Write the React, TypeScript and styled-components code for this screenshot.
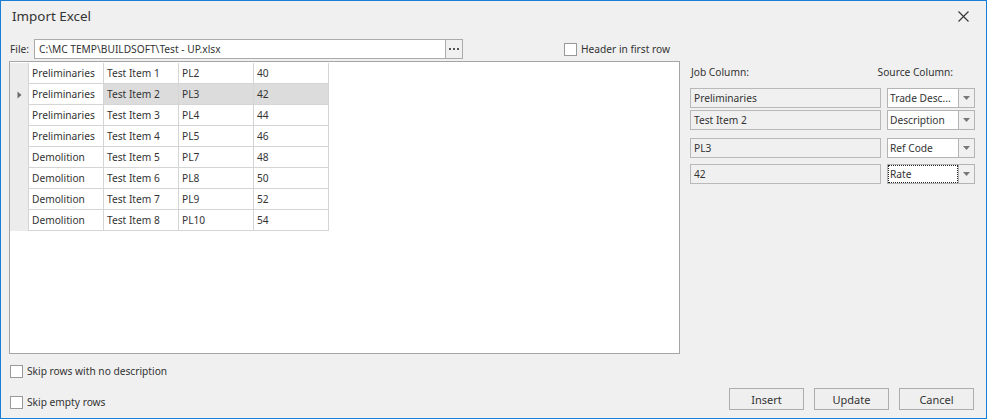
import React from "react";
import styled, { createGlobalStyle } from "styled-components";

const GlobalStyle = createGlobalStyle`
  html, body {
    margin: 0;
    padding: 0;
    background: #f0f0f0;
  }
  * {
    box-sizing: border-box;
  }
`;

const rows = [
  ["Preliminaries", "Test Item 1", "PL2", "40"],
  ["Preliminaries", "Test Item 2", "PL3", "42"],
  ["Preliminaries", "Test Item 3", "PL4", "44"],
  ["Preliminaries", "Test Item 4", "PL5", "46"],
  ["Demolition", "Test Item 5", "PL7", "48"],
  ["Demolition", "Test Item 6", "PL8", "50"],
  ["Demolition", "Test Item 7", "PL9", "52"],
  ["Demolition", "Test Item 8", "PL10", "54"],
];

const mappings = [
  { job: "Preliminaries", source: "Trade Desc...", gap: 0, focused: false },
  { job: "Test Item 2", source: "Description", gap: 2, focused: false },
  { job: "PL3", source: "Ref Code", gap: 8, focused: false },
  { job: "42", source: "Rate", gap: 6, focused: true },
];

const Window = styled.div`
  width: 987px;
  height: 419px;
  border: 1px solid #1a7fd4;
  background: #f0f0f0;
  display: flex;
  flex-direction: column;
  font-family: "Noto Sans", "Open Sans", sans-serif;
  font-size: 10.2px;
  color: #333;
`;

const TitleBar = styled.div`
  height: 30px;
  display: flex;
  align-items: center;
  justify-content: space-between;
  padding: 0 17px 0 11px;
`;

const Title = styled.div`
  font-size: 13.4px;
  color: #333;
`;

const CloseButton = styled.div`
  width: 12px;
  height: 12px;
  display: flex;
  align-items: center;
  justify-content: center;
`;

const FileRow = styled.div`
  display: flex;
  align-items: center;
  height: 20px;
  margin-top: 8px;
  padding-left: 9px;
`;

const FileLabel = styled.span`
  width: 24px;
`;

const PathBox = styled.div`
  width: 429px;
  height: 20px;
  display: flex;
  background: #fff;
  border: 1px solid #ababab;
`;

const PathText = styled.div`
  flex: 1;
  padding: 0 4px;
  line-height: 18px;
  white-space: nowrap;
  overflow: hidden;
`;

const EllipsisButton = styled.div`
  width: 17px;
  border-left: 1px solid #ababab;
  background: #f0f0f0;
  display: flex;
  align-items: center;
  justify-content: center;
`;

const CheckLabel = styled.label<{ $offset?: number }>`
  display: flex;
  align-items: center;
  gap: 4px;
  height: 14px;
  margin-left: ${(p) => p.$offset ?? 0}px;
  white-space: nowrap;
`;

const CheckBox = styled.span`
  width: 13px;
  height: 13px;
  flex: none;
  background: #fff;
  border: 1px solid #999;
`;

const Body = styled.div`
  display: flex;
  margin-top: 2px;
  padding-left: 8px;
  gap: 10px;
`;

const GridPanel = styled.div`
  width: 671px;
  height: 293px;
  background: #fff;
  border: 1px solid #a5a5a5;
  padding-top: 1px;
`;

const GridRow = styled.div`
  display: flex;
  height: 21px;
`;

const Indicator = styled.div`
  width: 18px;
  background: #ececec;
  display: flex;
  align-items: center;
  justify-content: center;
`;

const Cell = styled.div<{ $selected?: boolean; $first?: boolean }>`
  width: ${(p) => (p.$first ? 76 : 75)}px;
  border-right: 1px solid #d5d5d5;
  border-bottom: 1px solid #d5d5d5;
  border-left: ${(p) => (p.$first ? "1px solid #d5d5d5" : "none")};
  background: ${(p) => (p.$selected ? "#dcdcdc" : "#fff")};
  padding-left: 3px;
  line-height: 20px;
  white-space: nowrap;
  overflow: hidden;
`;

const SidePanel = styled.div`
  width: 285px;
  display: flex;
  flex-direction: column;
`;

const SideHeader = styled.div`
  display: flex;
  justify-content: space-between;
  padding: 4px 22px 0 1px;
  height: 27px;
`;

const MapRow = styled.div<{ $gap: number }>`
  display: flex;
  gap: 6px;
  margin-top: ${(p) => p.$gap}px;
`;

const JobBox = styled.div`
  width: 191px;
  height: 20px;
  border: 1px solid #b9b9b9;
  background: #f0f0f0;
  padding-left: 3px;
  line-height: 18px;
`;

const Combo = styled.div`
  width: 88px;
  height: 20px;
  display: flex;
  border: 1px solid #b4b4b4;
  background: #fff;
`;

const ComboText = styled.div<{ $focused?: boolean }>`
  flex: 1;
  margin: 1px;
  padding-left: 1px;
  line-height: 16px;
  white-space: nowrap;
  overflow: hidden;
  outline: ${(p) => (p.$focused ? "1px dotted #222" : "none")};
`;

const ComboButton = styled.div`
  width: 16px;
  border-left: 1px solid #b4b4b4;
  background: #f0f0f0;
  display: flex;
  align-items: center;
  justify-content: center;
`;

const Footer = styled.div`
  flex: 1;
  display: flex;
  justify-content: space-between;
  padding: 0 12px 8px 9px;
`;

const FooterChecks = styled.div`
  display: flex;
  flex-direction: column;
  gap: 17px;
  padding-top: 10px;
`;

const Buttons = styled.div`
  display: flex;
  gap: 10px;
  align-items: flex-end;
`;

const Button = styled.div`
  width: 75px;
  height: 22px;
  border: 1px solid #adadad;
  background: #efefef;
  display: flex;
  align-items: center;
  justify-content: center;
  font-size: 11px;
`;

const RowArrow = () => (
  <svg width="5" height="8" viewBox="0 0 5 8">
    <path d="M0.5 0.5 L4.5 4 L0.5 7.5 Z" fill="#6b6b6b" />
  </svg>
);

const DownArrow = () => (
  <svg width="7" height="4" viewBox="0 0 7 4">
    <path d="M0 0 H7 L3.5 4 Z" fill="#777" />
  </svg>
);

const Dots = () => (
  <svg width="10" height="2" viewBox="0 0 10 2">
    <rect x="0" y="0" width="2" height="2" fill="#555" />
    <rect x="4" y="0" width="2" height="2" fill="#555" />
    <rect x="8" y="0" width="2" height="2" fill="#555" />
  </svg>
);

export default function App() {
  return (
    <>
      <GlobalStyle />
      <Window>
        <TitleBar>
          <Title>Import Excel</Title>
          <CloseButton>
            <svg width="11" height="11" viewBox="0 0 11 11">
              <path d="M0.5 0.5 L10.5 10.5 M10.5 0.5 L0.5 10.5" stroke="#333" strokeWidth="1.1" />
            </svg>
          </CloseButton>
        </TitleBar>

        <FileRow>
          <FileLabel>File:</FileLabel>
          <PathBox>
            <PathText>C:\MC TEMP\BUILDSOFT\Test - UP.xlsx</PathText>
            <EllipsisButton>
              <Dots />
            </EllipsisButton>
          </PathBox>
          <CheckLabel $offset={101}>
            <CheckBox />
            Header in first row
          </CheckLabel>
        </FileRow>

        <Body>
          <GridPanel>
            {rows.map((r, i) => (
              <GridRow key={i}>
                <Indicator>{i === 1 && <RowArrow />}</Indicator>
                {r.map((v, j) => (
                  <Cell key={j} $first={j === 0} $selected={i === 1 && j > 0}>
                    {v}
                  </Cell>
                ))}
              </GridRow>
            ))}
          </GridPanel>

          <SidePanel>
            <SideHeader>
              <span>Job Column:</span>
              <span>Source Column:</span>
            </SideHeader>
            {mappings.map((m) => (
              <MapRow key={m.job} $gap={m.gap}>
                <JobBox>{m.job}</JobBox>
                <Combo>
                  <ComboText $focused={m.focused}>{m.source}</ComboText>
                  <ComboButton>
                    <DownArrow />
                  </ComboButton>
                </Combo>
              </MapRow>
            ))}
          </SidePanel>
        </Body>

        <Footer>
          <FooterChecks>
            <CheckLabel>
              <CheckBox />
              Skip rows with no description
            </CheckLabel>
            <CheckLabel>
              <CheckBox />
              Skip empty rows
            </CheckLabel>
          </FooterChecks>
          <Buttons>
            <Button>Insert</Button>
            <Button>Update</Button>
            <Button>Cancel</Button>
          </Buttons>
        </Footer>
      </Window>
    </>
  );
}
